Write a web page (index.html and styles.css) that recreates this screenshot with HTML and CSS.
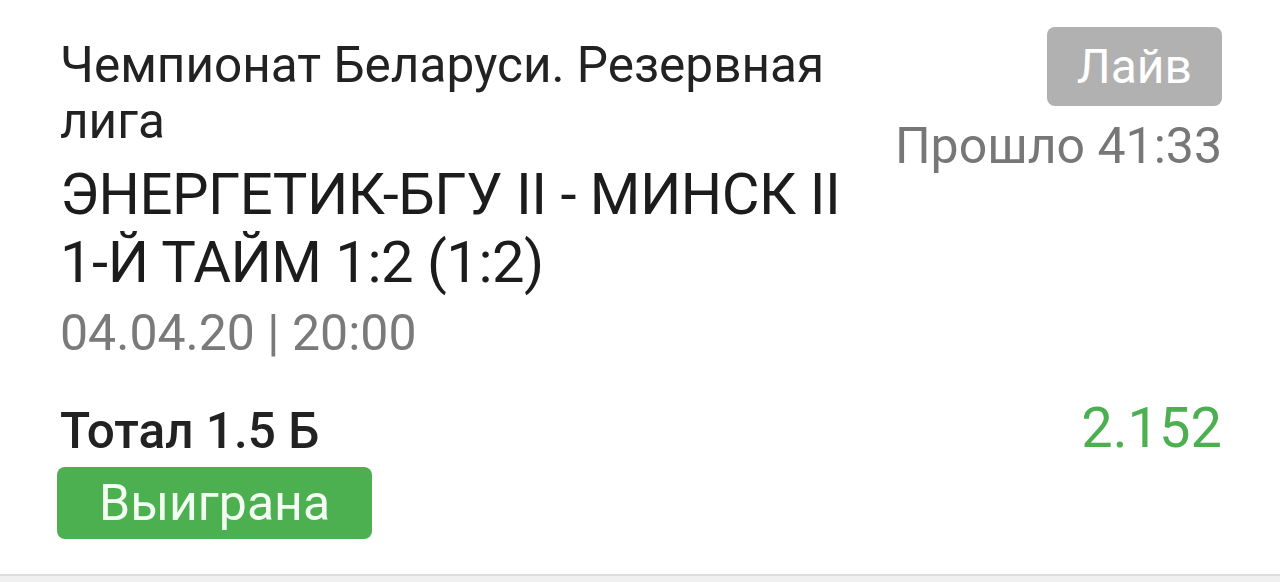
FILE: index.html
```html
<!DOCTYPE html>
<html lang="ru">
<head>
    <meta charset="UTF-8">
    <title>Ставка</title>
    <link rel="stylesheet" href="styles.css">
</head>
<body>
    <div class="bet-card">
        <div class="bet-top">
            <div class="event">
                <div class="league">Чемпионат Беларуси. Резервная лига</div>
                <div class="teams">ЭНЕРГЕТИК-БГУ II - МИНСК II<br>1-Й ТАЙМ 1:2 (1:2)</div>
                <div class="date">04.04.20 | 20:00</div>
            </div>
            <div class="status">
                <span class="live-badge">Лайв</span>
                <div class="elapsed">Прошло 41:33</div>
            </div>
        </div>
        <div class="bet-bottom">
            <div class="outcome">
                <div class="market">Тотал 1.5 Б</div>
                <span class="won-badge">Выиграна</span>
            </div>
            <div class="coef">2.152</div>
        </div>
    </div>
</body>
</html>
```

FILE: styles.css
```css
body { margin: 0; background: #f0f0f0; font-family: Roboto, "Noto Sans", sans-serif; }
.bet-card { background: #fff; padding: 27px 58px 35px 60px; border-bottom: 2px solid #dcdcdc; }
.bet-top { display: flex; justify-content: space-between; }
.event { width: 800px; padding-top: 10px; }
.league { font-size: 49.5px; line-height: 56px; color: #222; }
.teams { font-size: 58px; line-height: 68px; letter-spacing: -0.5px; color: #1c1c1c; margin-top: 11px; }
.date { font-size: 50px; line-height: 56px; color: #7a7a7a; margin-top: 9px; }
.status { display: flex; flex-direction: column; align-items: flex-end; }
.live-badge { background: #b1b1b1; color: #fff; font-size: 48px; line-height: 79px; padding: 0 30px; border-radius: 8px; }
.elapsed { font-size: 50px; line-height: 56px; color: #777; margin-top: 12px; }
.bet-bottom { display: flex; justify-content: space-between; align-items: flex-start; margin-top: 42px; }
.market { font-size: 49.5px; line-height: 56px; font-weight: 500; color: #222; }
.won-badge { display: inline-block; background: #4caf50; color: #f2fff2; font-size: 50px; line-height: 72px; padding: 0 42px; border-radius: 8px; margin-top: 8px; margin-left: -3px; }
.coef { font-size: 56px; line-height: 56px; color: #4caf50; margin-top: -3px; }
```
